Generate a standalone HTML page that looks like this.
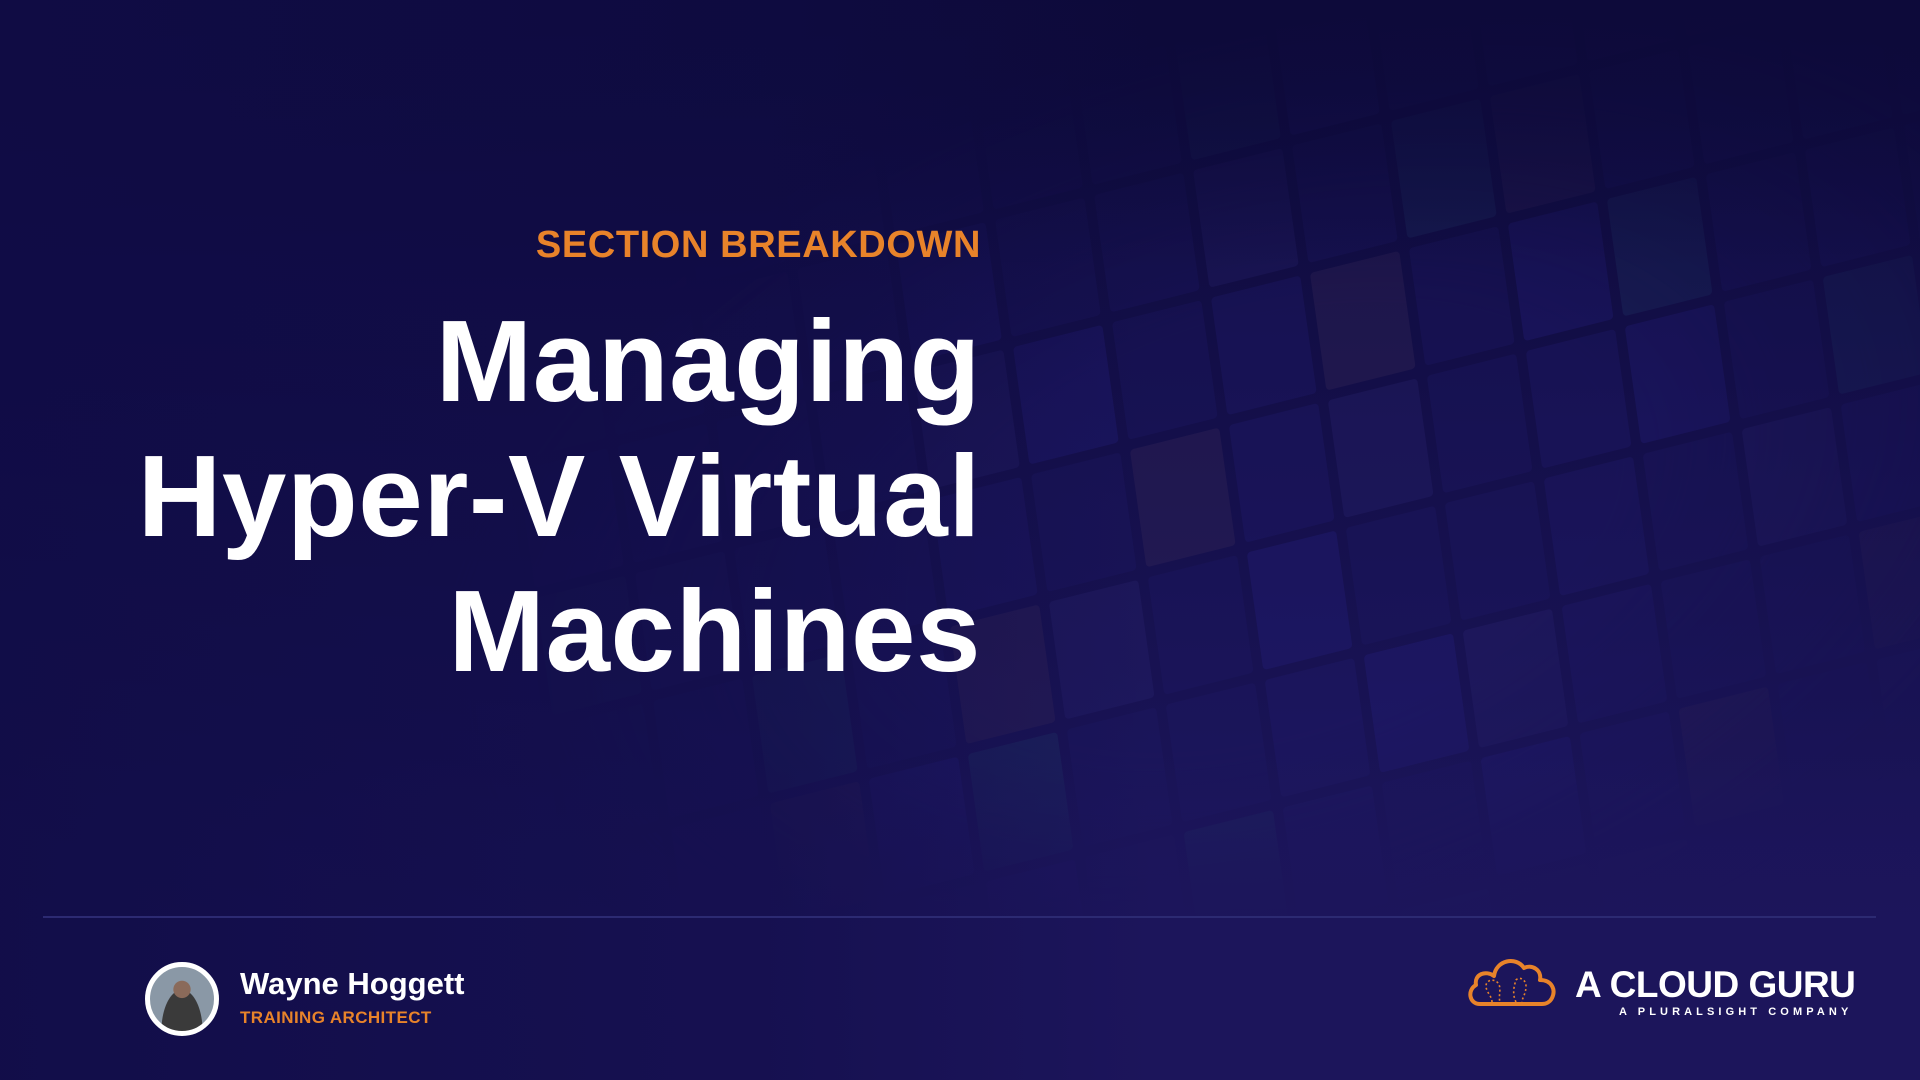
<!DOCTYPE html>
<html><head><meta charset="utf-8"><style>
html,body{margin:0;padding:0;width:1920px;height:1080px;overflow:hidden}
#w{width:1920px;height:1080px;overflow:hidden;position:relative;background:linear-gradient(180deg,#0d0a3a 0%,#140f4a 40%,#1a1457 75%,#1c155b 100%);font-family:"Liberation Sans",sans-serif}
.tiles{position:absolute;left:-200px;top:-80px;width:2400px;height:1080px;overflow:hidden;transform:rotate(-14deg) skewX(-6deg);transform-origin:1400px 500px;display:grid;grid-template-columns:repeat(24,92px);grid-auto-rows:118px;gap:10px;opacity:.32;
-webkit-mask-image:radial-gradient(ellipse 900px 520px at 1450px 620px,#000 40%,transparent 100%);mask-image:radial-gradient(ellipse 900px 520px at 1450px 620px,#000 40%,transparent 100%)}
.tiles div{background:#1f1a66;border-radius:4px}
.tiles div:nth-child(3n){background:#221c70}
.tiles div:nth-child(5n){background:#262080}
.tiles div:nth-child(7n){background:#2a2470}
.tiles div:nth-child(11n){background:#3a2a5a}
.tiles div:nth-child(13n){background:#223a6a}
.fade{position:absolute;inset:0;background:linear-gradient(90deg,rgba(16,12,70,.85) 0%,rgba(16,12,70,.5) 40%,rgba(16,12,70,0) 60%),linear-gradient(180deg,rgba(13,10,58,.9) 0%,rgba(13,10,58,0) 25%,rgba(28,21,91,0) 70%,rgba(28,21,91,1) 86%)}
.sec{position:absolute;right:939px;top:224px;color:#e8832a;font-weight:bold;font-size:38px;letter-spacing:0.6px;white-space:nowrap}
.title{position:absolute;right:939px;top:294px;color:#fff;font-weight:bold;font-size:116px;line-height:135px;text-align:right;letter-spacing:0.5px;white-space:nowrap}
.line{position:absolute;left:43px;width:1833px;top:916px;height:2px;background:#2c2a72}
.av{position:absolute;left:145px;top:962px;width:64px;height:64px;border:5px solid #fff;border-radius:50%;background:radial-gradient(circle at 50% 35%,#8a6a5a 0 16%,transparent 17%),radial-gradient(ellipse at 50% 100%,#3a3a3a 0 45%,transparent 46%),#8a98a6;overflow:hidden}
.name{position:absolute;left:240px;top:966px;color:#fff;font-weight:bold;font-size:31px;white-space:nowrap}
.role{position:absolute;left:240px;top:1008px;color:#e8832a;font-weight:bold;font-size:17px;letter-spacing:0.4px;white-space:nowrap}
.logo{position:absolute;left:1575px;top:964px;color:#fff;font-weight:bold;font-size:37px;white-space:nowrap;letter-spacing:-.5px}
.sub{position:absolute;left:1619px;top:1006px;color:#fff;font-weight:bold;font-size:11px;letter-spacing:4.1px;white-space:nowrap}
</style></head><body><div id="w">
<div class="tiles">
<div></div><div></div><div></div><div></div><div></div><div></div><div></div><div></div><div></div><div></div><div></div><div></div><div></div><div></div><div></div><div></div><div></div><div></div><div></div><div></div><div></div><div></div><div></div><div></div>
<div></div><div></div><div></div><div></div><div></div><div></div><div></div><div></div><div></div><div></div><div></div><div></div><div></div><div></div><div></div><div></div><div></div><div></div><div></div><div></div><div></div><div></div><div></div><div></div>
<div></div><div></div><div></div><div></div><div></div><div></div><div></div><div></div><div></div><div></div><div></div><div></div><div></div><div></div><div></div><div></div><div></div><div></div><div></div><div></div><div></div><div></div><div></div><div></div>
<div></div><div></div><div></div><div></div><div></div><div></div><div></div><div></div><div></div><div></div><div></div><div></div><div></div><div></div><div></div><div></div><div></div><div></div><div></div><div></div><div></div><div></div><div></div><div></div>
<div></div><div></div><div></div><div></div><div></div><div></div><div></div><div></div><div></div><div></div><div></div><div></div><div></div><div></div><div></div><div></div><div></div><div></div><div></div><div></div><div></div><div></div><div></div><div></div>
<div></div><div></div><div></div><div></div><div></div><div></div><div></div><div></div><div></div><div></div><div></div><div></div><div></div><div></div><div></div><div></div><div></div><div></div><div></div><div></div><div></div><div></div><div></div><div></div>
<div></div><div></div><div></div><div></div><div></div><div></div><div></div><div></div><div></div><div></div><div></div><div></div><div></div><div></div><div></div><div></div><div></div><div></div><div></div><div></div><div></div><div></div><div></div><div></div>
<div></div><div></div><div></div><div></div><div></div><div></div><div></div><div></div><div></div><div></div><div></div><div></div><div></div><div></div><div></div><div></div><div></div><div></div><div></div><div></div><div></div><div></div><div></div><div></div>
<div></div><div></div><div></div><div></div><div></div><div></div><div></div><div></div><div></div><div></div><div></div><div></div><div></div><div></div><div></div><div></div><div></div><div></div><div></div><div></div><div></div><div></div><div></div><div></div>
</div>
<div class="fade"></div>
<div class="sec">SECTION BREAKDOWN</div>
<div class="title">Managing<br>Hyper-V Virtual<br>Machines</div>
<div class="line"></div>
<div class="av"></div>
<div class="name">Wayne Hoggett</div>
<div class="role">TRAINING ARCHITECT</div>
<svg style="position:absolute;left:1464px;top:950px" width="94" height="60" viewBox="0 0 94 60">
<path d="M16 54 C5 54 3 40 12 35 C10 24 22 20 30 26 C32 10 52 6 60 18 C68 14 78 20 76 30 C88 30 92 40 88 48 C86 52 82 54 78 54 Z" fill="none" stroke="#e8832a" stroke-width="4" stroke-linejoin="round"/>
<path d="M28 52 C28 46 22 42 22 36 C22 30 30 28 34 33 C38 38 34 46 36 52 M52 52 C48 44 50 36 52 30 C56 26 62 30 62 36 C62 44 58 48 58 52" fill="none" stroke="#e8832a" stroke-width="1.6" stroke-dasharray="2 2.5"/>
</svg>
<div class="logo">A CLOUD GURU</div>
<div class="sub">A PLURALSIGHT COMPANY</div>
</div></body></html>
